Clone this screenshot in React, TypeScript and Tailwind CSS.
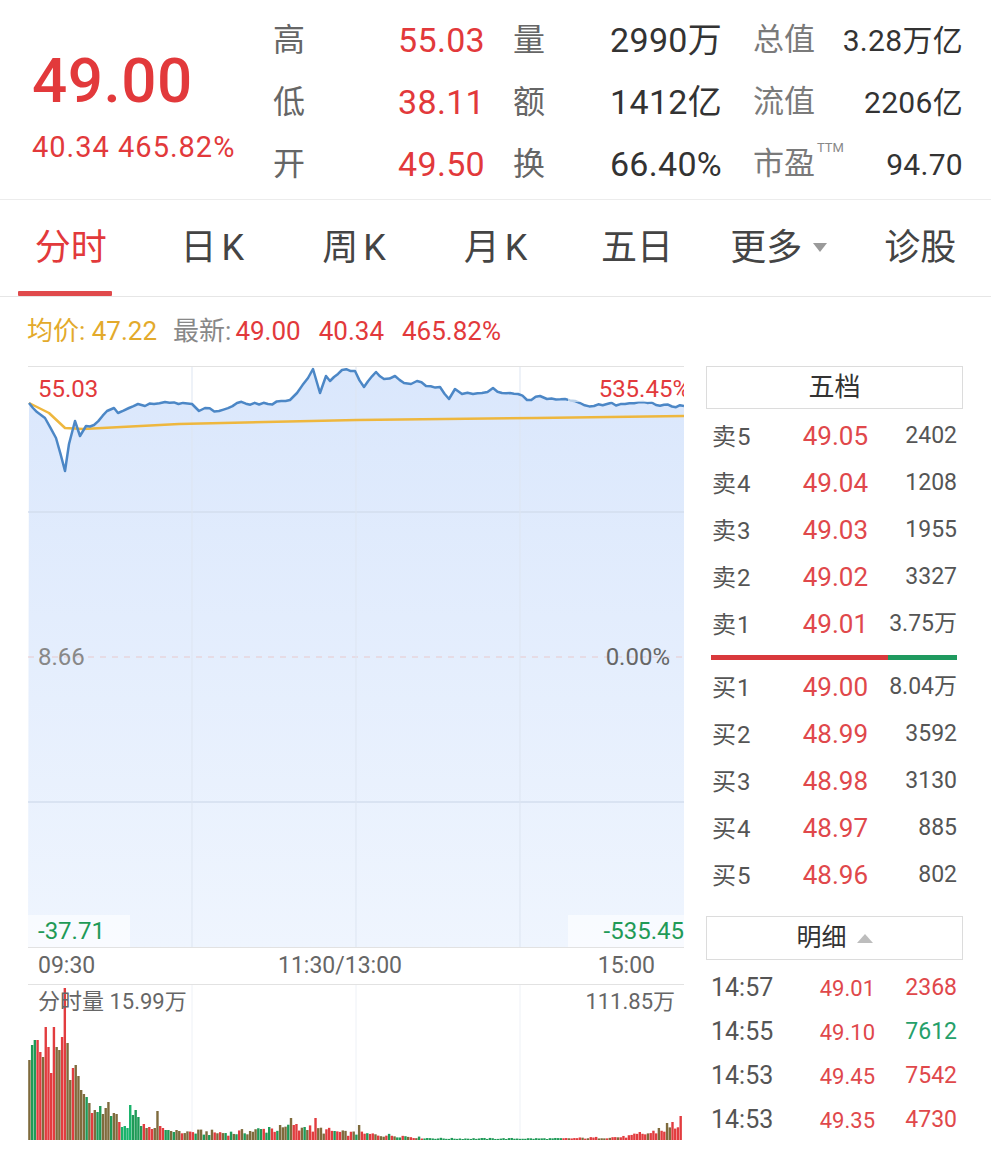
import React from 'react';

const RED = '#e23c3f';
const GREEN = '#1f9a57';
const OLIVE = '#7f6b3d';

// intraday price / average curves, in chart pixel space (656 x 580)
const pricePts: [number, number][] = [
  [1, 36], [5, 41], [17, 51], [28, 71], [37, 104], [41, 77], [47, 54], [52, 69], [58, 59], [66, 58],
  [79, 44], [86, 41], [90, 46], [101, 41], [110, 37], [117, 39], [126, 37], [137, 35], [164, 37],
  [171, 44], [177, 41], [191, 44], [209, 36], [240, 37], [262, 33], [269, 26], [280, 11], [285, 2],
  [292, 26], [298, 9], [302, 14], [314, 3], [327, 4], [336, 20], [348, 5], [356, 12], [367, 9],
  [376, 16], [383, 17], [389, 14], [398, 19], [412, 20], [421, 32], [427, 22], [434, 27], [445, 27],
  [454, 26], [465, 21], [474, 26], [490, 27], [499, 33], [512, 29], [519, 32], [537, 32], [552, 36],
  [566, 39], [579, 37], [597, 37], [615, 35], [628, 38], [656, 39],
];

const avgPts: [number, number][] = [
  [1, 36], [21, 46], [37, 61], [55, 62], [151, 57], [329, 53], [508, 51], [656, 49],
];

const rnd = (i: number) => {
  const s = Math.sin(i * 12.9898 + 78.233) * 43758.5453;
  return s - Math.floor(s);
};

// adds the small tick-by-tick wobble between the main turning points
const roughen = (pts: [number, number][]) => {
  const out: [number, number][] = [pts[0]];
  let n = 0;
  for (let k = 1; k < pts.length; k++) {
    const [x0, y0] = pts[k - 1];
    const [x1, y1] = pts[k];
    const steps = Math.floor((x1 - x0) / 4);
    for (let s = 1; s < steps; s++) {
      const t = s / steps;
      n++;
      out.push([x0 + (x1 - x0) * t, y0 + (y1 - y0) * t + (rnd(n) - 0.5) * 3]);
    }
    out.push(pts[k]);
  }
  return out;
};

const toPath = (pts: [number, number][]) =>
  pts.map(([x, y], i) => `${i === 0 ? 'M' : 'L'}${x.toFixed(1)} ${y.toFixed(1)}`).join(' ');

const priceLine = roughen(pricePts);

// volume bars
const head = [
  80, 95, 100, 100, 88, 83, 113, 93, 67, 113, 93, 90, 103, 152, 97, 60, 72, 75, 64, 50, 46, 43, 37, 27,
  30, 28, 34, 26, 32, 38, 24, 27, 26, 18, 13, 14, 12, 35, 25, 30, 23, 14, 16, 12, 13, 11, 12, 29, 14,
  12, 10, 10, 9, 8, 10, 9,
];

const knots: [number, number][] = [
  [56, 8], [75, 7], [85, 10], [95, 12], [105, 11], [115, 7], [122, 6], [137, 4], [145, 2], [153, 1.5],
  [196, 1.5], [218, 3], [228, 7], [236, 13], [240, 18],
];

const spikes: Record<number, number> = {
  88: 13, 92: 15, 96: 22, 98: 16, 101: 13, 105: 22, 112: 9, 121: 15, 224: 8, 231: 12, 234: 17, 236: 18, 239: 24,
};

const baseAt = (i: number) => {
  for (let k = 0; k < knots.length - 1; k++) {
    const [x0, y0] = knots[k];
    const [x1, y1] = knots[k + 1];
    if (i >= x0 && i <= x1) return y0 + ((y1 - y0) * (i - x0)) / (x1 - x0);
  }
  return 2;
};

const volumes = Array.from({ length: 240 }, (_, i) => {
  if (i < head.length) return head[i];
  if (spikes[i]) return spikes[i];
  return Math.max(1, baseAt(i) * (0.6 + 0.8 * rnd(i)));
});

const barColor = (i: number) => {
  const r = rnd(i + 31);
  if (i === 13 || i === 6 || i === 9 || i === 3) return RED;
  if (i < 34) return r < 0.28 ? RED : r < 0.42 ? GREEN : OLIVE;
  if (i < 38) return '#19b36b';
  if (i < 53) return r < 0.35 ? RED : r < 0.6 ? GREEN : OLIVE;
  if (i < 145) return r < 0.35 ? RED : r < 0.75 ? OLIVE : GREEN;
  if (i < 196) return GREEN;
  if (i === 239) return RED;
  return r < 0.6 ? RED : OLIVE;
};

const asks = [
  ['卖', '5', '49.05', '2402'],
  ['卖', '4', '49.04', '1208'],
  ['卖', '3', '49.03', '1955'],
  ['卖', '2', '49.02', '3327'],
  ['卖', '1', '49.01', '3.75万'],
];

const bids = [
  ['买', '1', '49.00', '8.04万'],
  ['买', '2', '48.99', '3592'],
  ['买', '3', '48.98', '3130'],
  ['买', '4', '48.97', '885'],
  ['买', '5', '48.96', '802'],
];

const ticks = [
  { t: '14:57', p: '49.01', v: '2368', up: true },
  { t: '14:55', p: '49.10', v: '7612', up: false },
  { t: '14:53', p: '49.45', v: '7542', up: true },
  { t: '14:53', p: '49.35', v: '4730', up: true },
];

const stats = [
  [
    ['高', '55.03'],
    ['低', '38.11'],
    ['开', '49.50'],
  ],
  [
    ['量', '2990万'],
    ['额', '1412亿'],
    ['换', '66.40%'],
  ],
  [
    ['总值', '3.28万亿'],
    ['流值', '2206亿'],
    ['市盈', '94.70'],
  ],
];

const tabs = ['分时', '日K', '周K', '月K', '五日', '更多', '诊股'];

function BookRow({ row }: { row: string[] }) {
  return (
    <div className="flex h-[47px] items-center pl-[6px] pr-[6px]">
      <div className="w-[80px] text-[24px] text-[#555]">
        {row[0]}
        <span className="ml-[1px]">{row[1]}</span>
      </div>
      <div className="w-[76px] text-right text-[26px] text-[#e0484b]">{row[2]}</div>
      <div className="flex-1 text-right text-[23px] text-[#555]">{row[3]}</div>
    </div>
  );
}

export default function App() {
  const fill = `${toPath(priceLine)} L656 580 L0 580 Z`;

  return (
    <div className="relative h-[1167px] w-[991px] overflow-hidden bg-white [font-family:Roboto,'Noto_Sans_CJK_SC',sans-serif]">
      {/* quote header */}
      <header className="flex h-[200px] border-b border-[#ececec]">
        <div className="w-[273px] pl-[32px] pt-[48px]">
          <div className="text-[62px] font-medium leading-[66px] tracking-[0.5px] text-[#e2393b]">49.00</div>
          <div className="mt-[17px] text-[29px] leading-[32px] tracking-[1px] text-[#e2393b]">40.34 465.82%</div>
        </div>

        {stats.map((col, ci) => (
          <div
            key={ci}
            className={
              ci === 0
                ? 'w-[212px] pt-[9px]'
                : ci === 1
                ? 'ml-[28px] w-[209px] pt-[9px]'
                : 'ml-[31px] w-[210px] pt-[9px]'
            }
          >
            {col.map(([label, value]) => (
              <div key={label} className="flex h-[62px] items-center justify-between">
                <span className={ci === 2 ? 'text-[31px] text-[#7a7a7a]' : 'text-[32px] text-[#666]'}>
                  {label}
                  {label === '市盈' && (
                    <span className="ml-[2px] align-top text-[13px] leading-none text-[#888]">TTM</span>
                  )}
                </span>
                <span
                  className={
                    ci === 0
                      ? 'text-[34px] tracking-[0.3px] text-[#e2393b]'
                      : ci === 1
                      ? 'text-[34px] tracking-[0.3px] text-[#333]'
                      : 'text-[30px] tracking-[0.3px] text-[#333]'
                  }
                >
                  {value}
                </span>
              </div>
            ))}
          </div>
        ))}
      </header>

      {/* period tabs */}
      <nav className="flex h-[97px] border-b border-[#e6e6e6]">
        {tabs.map((t, i) => (
          <div
            key={t}
            className={
              i === 0
                ? 'relative flex flex-1 items-center justify-center text-[36px] text-[#e2393b]'
                : 'relative flex flex-1 items-center justify-center text-[36px] text-[#444]'
            }
          >
            {t.endsWith('K') ? (
              <>
                {t[0]}
                <span className="ml-[5px]">K</span>
              </>
            ) : (
              t
            )}
            {t === '更多' && (
              <svg width="14" height="10" viewBox="0 0 14 10" className="ml-[11px]">
                <path d="M0 0 L14 0 L7 9 Z" fill="#9a9a9a" />
              </svg>
            )}
            {i === 0 && <div className="absolute bottom-0 left-[18px] h-[5px] w-[94px] rounded-[1px] bg-[#e04a4c]" />}
          </div>
        ))}
      </nav>

      {/* summary line */}
      <div className="flex h-[69px] items-center pl-[27px] text-[26px]">
        <span className="text-[#e3aa2b]">均价: 47.22</span>
        <span className="ml-[16px] text-[#888]">最新:</span>
        <span className="ml-[4px] text-[#e2393b]">49.00</span>
        <span className="ml-[18px] text-[#e2393b]">40.34</span>
        <span className="ml-[18px] text-[#e2393b]">465.82%</span>
      </div>

      <div className="flex">
        {/* charts */}
        <div className="ml-[28px] w-[656px]">
          <div className="relative h-[582px] overflow-hidden border-b border-t border-[#e2e2e2]">
            <svg className="absolute inset-0" width="656" height="580" viewBox="0 0 656 580">
              <defs>
                <linearGradient id="area" x1="0" y1="0" x2="0" y2="1">
                  <stop offset="0" stopColor="#dae7fc" />
                  <stop offset="1" stopColor="#eff5fe" />
                </linearGradient>
              </defs>
              <path d={fill} fill="url(#area)" />
              {[145, 435].map((y) => (
                <line key={y} x1="0" x2="656" y1={y} y2={y} stroke="#d3deee" strokeWidth="1.5" />
              ))}
              <line x1="0" x2="656" y1="290" y2="290" stroke="#e8c9cc" strokeWidth="1" strokeDasharray="6 6" />
              {[164, 328, 492].map((x) => (
                <line key={x} x1={x} x2={x} y1="0" y2="580" stroke="#dde5f1" strokeWidth="1" />
              ))}
              <path d={toPath(avgPts)} fill="none" stroke="#eeb73e" strokeWidth="2.5" strokeLinejoin="round" />
              <path d={toPath(priceLine)} fill="none" stroke="#4c87c6" strokeWidth="2.5" strokeLinejoin="round" />
            </svg>

            <span className="absolute left-[10px] top-[8px] text-[24px] leading-[28px] text-[#e2393b]">55.03</span>
            <div className="absolute right-0 top-[1px] h-[34px] w-[116px] bg-white/60" />
            <span className="absolute right-[-6px] top-[8px] text-[24px] leading-[28px] text-[#e2393b]">535.45%</span>

            <span className="absolute left-[10px] top-[276px] text-[24px] leading-[28px] text-[#888]">8.66</span>
            <span className="absolute right-[14px] top-[276px] text-[24px] leading-[28px] text-[#666]">0.00%</span>

            <div className="absolute bottom-0 left-0 flex h-[32px] w-[102px] items-center bg-white/60 pl-[10px] text-[24px] text-[#1f9a57]">
              -37.71
            </div>
            <div className="absolute bottom-0 right-0 flex h-[32px] w-[116px] items-center justify-end bg-white/60 text-[24px] text-[#1f9a57]">
              -535.45
            </div>
          </div>

          <div className="relative flex h-[37px] items-center justify-between border-b border-[#e2e2e2] pl-[10px] pr-[29px] text-[23px] text-[#666]">
            <span>09:30</span>
            <span className="absolute left-[312px] -translate-x-1/2">11:30/13:00</span>
            <span>15:00</span>
          </div>

          <div className="relative h-[182px]">
            <svg className="absolute inset-0" width="656" height="182" viewBox="0 0 656 182">
              {[164, 328, 492].map((x) => (
                <line key={x} x1={x} x2={x} y1="0" y2="155" stroke="#eef1f6" strokeWidth="1" />
              ))}
              {volumes.map((h, i) => (
                <rect key={i} x={i * 2.725 + 0.2} y={155 - h} width="2.4" height={h} fill={barColor(i)} />
              ))}
            </svg>
            <div className="relative flex justify-between pl-[10px] pr-[9px] pt-[3px] text-[22px] leading-[28px] text-[#666]">
              <span>分时量 15.99万</span>
              <span>111.85万</span>
            </div>
          </div>
        </div>

        {/* order book + trade ticks */}
        <div className="ml-[22px] w-[257px]">
          <div className="flex h-[43px] items-center justify-center border border-[#dcdcdc] text-[26px] text-[#333]">五档</div>
          <div className="pt-[4px]">
            {asks.map((r) => (
              <BookRow key={r[1] + r[0]} row={r} />
            ))}
          </div>
          <div className="ml-[5px] mr-[6px] mt-[7px] flex h-[5px]">
            <div className="w-[177px] bg-[#d9393c]" />
            <div className="flex-1 bg-[#1f9a5f]" />
          </div>
          <div className="mt-[4px]">
            {bids.map((r) => (
              <BookRow key={r[1] + r[0]} row={r} />
            ))}
          </div>

          <div className="mt-[17px] flex h-[44px] items-center justify-center border border-[#dcdcdc] text-[25px] text-[#333]">
            明细
            <svg width="16" height="10" viewBox="0 0 16 10" className="ml-[10px]">
              <path d="M0 10 L16 10 L8 1 Z" fill="#bdbdbd" />
            </svg>
          </div>
          <div className="pt-[6px]">
            {ticks.map((t, i) => (
              <div key={i} className="flex h-[44px] items-center pl-[5px] pr-[6px]">
                <span className="w-[94px] text-[25px] text-[#555]">{t.t}</span>
                <span className="w-[70px] text-right text-[22px] text-[#e0484b]">{t.p}</span>
                <span className={t.up ? 'flex-1 text-right text-[23px] text-[#e0484b]' : 'flex-1 text-right text-[23px] text-[#25a06a]'}>
                  {t.v}
                </span>
              </div>
            ))}
          </div>
        </div>
      </div>
    </div>
  );
}
